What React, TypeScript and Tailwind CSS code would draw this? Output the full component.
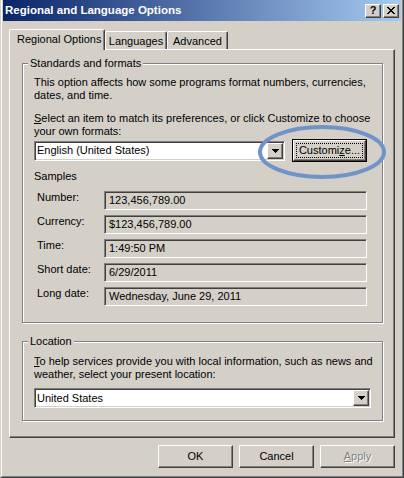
import type { ReactNode } from "react";

// classic 3D edges
const raised =
  "border border-t-white border-l-white border-r-[#404040] border-b-[#404040] shadow-[inset_-1px_-1px_#808080]";
const sunken =
  "border border-t-[#808080] border-l-[#808080] border-r-white border-b-white shadow-[inset_1px_1px_#404040,inset_-1px_-1px_#d4d0c8]";
const etched = "border border-[#808080] shadow-[1px_1px_0_#fff,inset_1px_1px_0_#fff]";

function ArrowDown() {
  return (
    <svg width="7" height="4" viewBox="0 0 7 4" shapeRendering="crispEdges">
      <path d="M0 0h7v1H0zM1 1h5v1H1zM2 2h3v1H2zM3 3h1v1H3z" fill="#000" />
    </svg>
  );
}

function CloseGlyph() {
  return (
    <svg width="8" height="7" viewBox="0 0 8 7" shapeRendering="crispEdges">
      <path
        d="M0 0h2v1H0zM6 0h2v1H6zM1 1h2v1H1zM5 1h2v1H5zM2 2h4v1H2zM3 3h2v1H3zM2 4h4v1H2zM1 5h2v1H1zM5 5h2v1H5zM0 6h2v1H0zM6 6h2v1H6z"
        fill="#000"
      />
    </svg>
  );
}

function Combo({ value, width }: { value: string; width: string }) {
  return (
    <div className={`${sunken} ${width} flex h-[20px] items-center bg-white`}>
      <span className="flex-1 pl-[2px] leading-[13px]">{value}</span>
      <span className={`${raised} mr-px flex h-[16px] w-[16px] items-center justify-center bg-[#d4d0c8]`}>
        <ArrowDown />
      </span>
    </div>
  );
}

function GroupBox({ title, height, children }: { title: string; height: string; children: ReactNode }) {
  return (
    <div className={`${etched} ${height} flex flex-col pl-[11px]`}>
      <span className="-mt-[7px] -ml-[6px] self-start bg-[#d4d0c8] px-[2px] leading-[13px]">{title}</span>
      {children}
    </div>
  );
}

const samples: [string, string][] = [
  ["Number:", "123,456,789.00"],
  ["Currency:", "$123,456,789.00"],
  ["Time:", "1:49:50 PM"],
  ["Short date:", "6/29/2011"],
  ["Long date:", "Wednesday, June 29, 2011"],
];

function Button({ children, disabled }: { children: ReactNode; disabled?: boolean }) {
  return (
    <div
      className={`${raised} flex h-[23px] w-[75px] items-center justify-center bg-[#d4d0c8] ${
        disabled ? "text-[#808080] [text-shadow:1px_1px_0_#fff]" : ""
      }`}
    >
      {children}
    </div>
  );
}

export default function App() {
  return (
    <div className="relative h-[478px] w-[404px] border-r border-b border-l border-r-[#404040] border-b-[#404040] border-l-[#d4d0c8] bg-[#d4d0c8] font-['Liberation_Sans',Arial,sans-serif] text-[11px] leading-[13px] text-black">
      <div className="flex h-full flex-col border-r border-b border-l border-r-[#808080] border-b-[#808080] border-l-white px-px pb-px">
        {/* title bar */}
        <div className="flex h-[21px] shrink-0 items-center bg-[linear-gradient(to_right,#0a246a,#a6caf0)] pr-[2px] pl-[2px]">
          <span className="flex-1 text-[11.5px] font-bold text-white">Regional and Language Options</span>
          <div className="flex gap-[2px]">
            <span className={`${raised} flex h-[14px] w-[16px] items-center justify-center bg-[#d4d0c8] text-[11px] leading-none font-bold`}>
              ?
            </span>
            <span className={`${raised} flex h-[14px] w-[16px] items-center justify-center bg-[#d4d0c8]`}>
              <CloseGlyph />
            </span>
          </div>
        </div>

        <div className="flex flex-1 flex-col px-[6px] pt-[8px]">
          {/* tabs */}
          <div className="flex h-[20px] items-end">
            <div className="relative z-10 -mb-px h-[21px] w-[96px] rounded-t-[2px] border-t border-r border-l border-t-white border-r-[#404040] border-l-white bg-[#d4d0c8] pt-[3px] pl-[7px] shadow-[inset_-1px_0_#808080]">
              Regional Options
            </div>
            <div className="h-[18px] w-[62px] rounded-t-[2px] border-t border-r border-l border-t-white border-r-[#404040] border-l-white pt-[3px] text-center shadow-[inset_-1px_0_#808080]">
              Languages
            </div>
            <div className="h-[18px] w-[61px] rounded-t-[2px] border-t border-r border-l border-t-white border-r-[#404040] border-l-white pt-[3px] text-center shadow-[inset_-1px_0_#808080]">
              Advanced
            </div>
          </div>

          {/* tab page */}
          <div className={`${raised} flex h-[389px] flex-col px-[12px] pt-[13px]`}>
            <GroupBox title="Standards and formats" height="h-[260px] w-[361px]">
              <p className="mt-[6px]">
                This option affects how some programs format numbers, currencies,
                <br />
                dates, and time.
              </p>
              <p className="mt-[10px]">
                <u className="underline-offset-1">S</u>elect an item to match its preferences, or click Customize to choose
                <br />
                your own formats:
              </p>
              <div className="mt-px flex h-[23px] items-center gap-[7px]">
                <Combo value="English (United States)" width="w-[251px]" />
                <div className="flex h-[23px] w-[75px] border border-black">
                  <div className={`${raised} flex flex-1 p-[2px]`}>
                    <span className="flex flex-1 items-center justify-center border border-dotted border-black">
                      Customi<u className="underline-offset-1">z</u>e...
                    </span>
                  </div>
                </div>
              </div>
              <span className="mt-[8px]">Samples</span>
              <div className="mt-[8px] flex flex-col gap-[5px] pl-[3px]">
                {samples.map(([label, value]) => (
                  <div key={label} className="flex items-start">
                    <span className="w-[67px]">{label}</span>
                    <div className={`${sunken} flex h-[19px] w-[263px] items-center pl-[4px]`}>{value}</div>
                  </div>
                ))}
              </div>
            </GroupBox>

            <div className="mt-[18px]">
              <GroupBox title="Location" height="h-[80px] w-[361px]">
                <p className="mt-[7px]">
                  <u className="underline-offset-1">T</u>o help services provide you with local information, such as news and
                  <br />
                  weather, select your present location:
                </p>
                <div className="mt-[7px]">
                  <Combo value="United States" width="w-[337px]" />
                </div>
              </GroupBox>
            </div>
          </div>

          {/* dialog buttons */}
          <div className="mt-[7px] flex justify-end gap-[6px]">
            <Button>OK</Button>
            <Button>Cancel</Button>
            <Button disabled>
              <span>
                <u className="underline-offset-1">A</u>pply
              </span>
            </Button>
          </div>
        </div>
      </div>

      {/* highlight ring drawn over the Customize button */}
      <svg className="pointer-events-none absolute top-[123px] left-[255px]" width="132" height="58">
        <ellipse cx="66" cy="29" rx="62" ry="25" fill="none" stroke="#7094c8" strokeWidth="4" />
      </svg>
    </div>
  );
}
